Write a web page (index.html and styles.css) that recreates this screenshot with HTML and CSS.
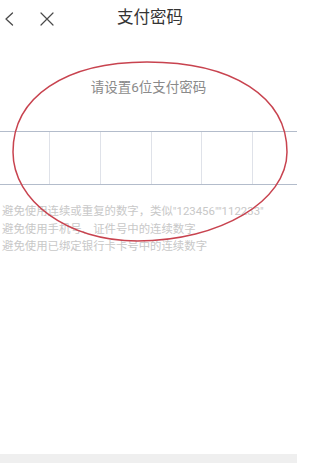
FILE: index.html
```html
<!DOCTYPE html>
<html lang="zh-CN">
<head>
<meta charset="utf-8">
<title>支付密码</title>
<link rel="stylesheet" href="styles.css">
</head>
<body>
<div class="page">
  <header class="topbar">
    <div class="nav-icons">
      <svg class="icon-back" width="10" height="14" viewBox="0 0 10 14"><path d="M8.5 1 L2 7 L8.5 13" fill="none" stroke="#4a4a4a" stroke-width="1.3" stroke-linecap="round" stroke-linejoin="round"/></svg>
      <svg class="icon-close" width="14" height="14" viewBox="0 0 14 14"><path d="M1 1 L13 13 M13 1 L1 13" fill="none" stroke="#4a4a4a" stroke-width="1.2" stroke-linecap="round"/></svg>
    </div>
    <h1 class="title">支付密码</h1>
    <div class="nav-spacer"></div>
  </header>
  <main class="content">
    <p class="prompt">请设置6位支付密码</p>
    <div class="pin-box">
      <div class="pin-cell"></div>
      <div class="pin-cell"></div>
      <div class="pin-cell"></div>
      <div class="pin-cell"></div>
      <div class="pin-cell"></div>
      <div class="pin-cell"></div>
    </div>
    <ul class="hints">
      <li>避免使用连续或重复的数字，类似"123456""112233"</li>
      <li>避免使用手机号、证件号中的连续数字</li>
      <li>避免使用已绑定银行卡卡号中的连续数字</li>
    </ul>
  </main>
  <footer class="bottom-band"></footer>
  <svg class="annotation" width="297" height="463" viewBox="0 0 297 463">
    <path d="M13 152 C13 97, 65 62, 147 62 C233 62, 287 97, 287 152 C287 201, 220 241, 137 241 C68 241, 13 201, 13 152 Z" fill="none" stroke="#c8434f" stroke-width="1.5"/>
  </svg>
</div>
</body>
</html>
```

FILE: styles.css
```css
html, body {
  margin: 0;
  padding: 0;
  background: #ffffff;
}

body {
  font-family: Roboto, "Noto Sans CJK SC", sans-serif;
}

.page {
  position: relative;
  width: 297px;
  height: 463px;
  overflow: hidden;
  display: flex;
  flex-direction: column;
}

.topbar {
  height: 37px;
  display: grid;
  grid-template-columns: 1fr auto 1fr;
  align-items: center;
}

.nav-icons {
  display: flex;
  align-items: center;
  gap: 26px;
  padding-left: 4px;
}

.icon-back, .icon-close {
  display: block;
}

.title {
  margin: 0;
  padding-left: 3px;
  font-size: 16.5px;
  font-weight: normal;
  line-height: 1;
  color: #333333;
}

.content {
  flex: 1;
  display: flex;
  flex-direction: column;
}

.prompt {
  margin: 41px 0 0;
  font-size: 13.5px;
  line-height: 19px;
  color: #8a8a8a;
  text-align: center;
}

.pin-box {
  margin: 34px 0 0 -1.5px;
  width: 304px;
  height: 52px;
  display: grid;
  grid-template-columns: repeat(6, 1fr);
  border-top: 1px solid #b3bccb;
  border-bottom: 1px solid #b3bccb;
}

.pin-cell + .pin-cell {
  border-left: 1px solid #dfe2e9;
}

.hints {
  list-style: none;
  margin: 18px 0 0;
  padding: 0 0 0 2px;
  font-size: 11.4px;
  line-height: 17.5px;
  color: #c8c8c8;
  white-space: nowrap;
}

.bottom-band {
  height: 9px;
  background: #efefef;
}

.annotation {
  position: absolute;
  left: 0;
  top: 0;
  pointer-events: none;
}
```
